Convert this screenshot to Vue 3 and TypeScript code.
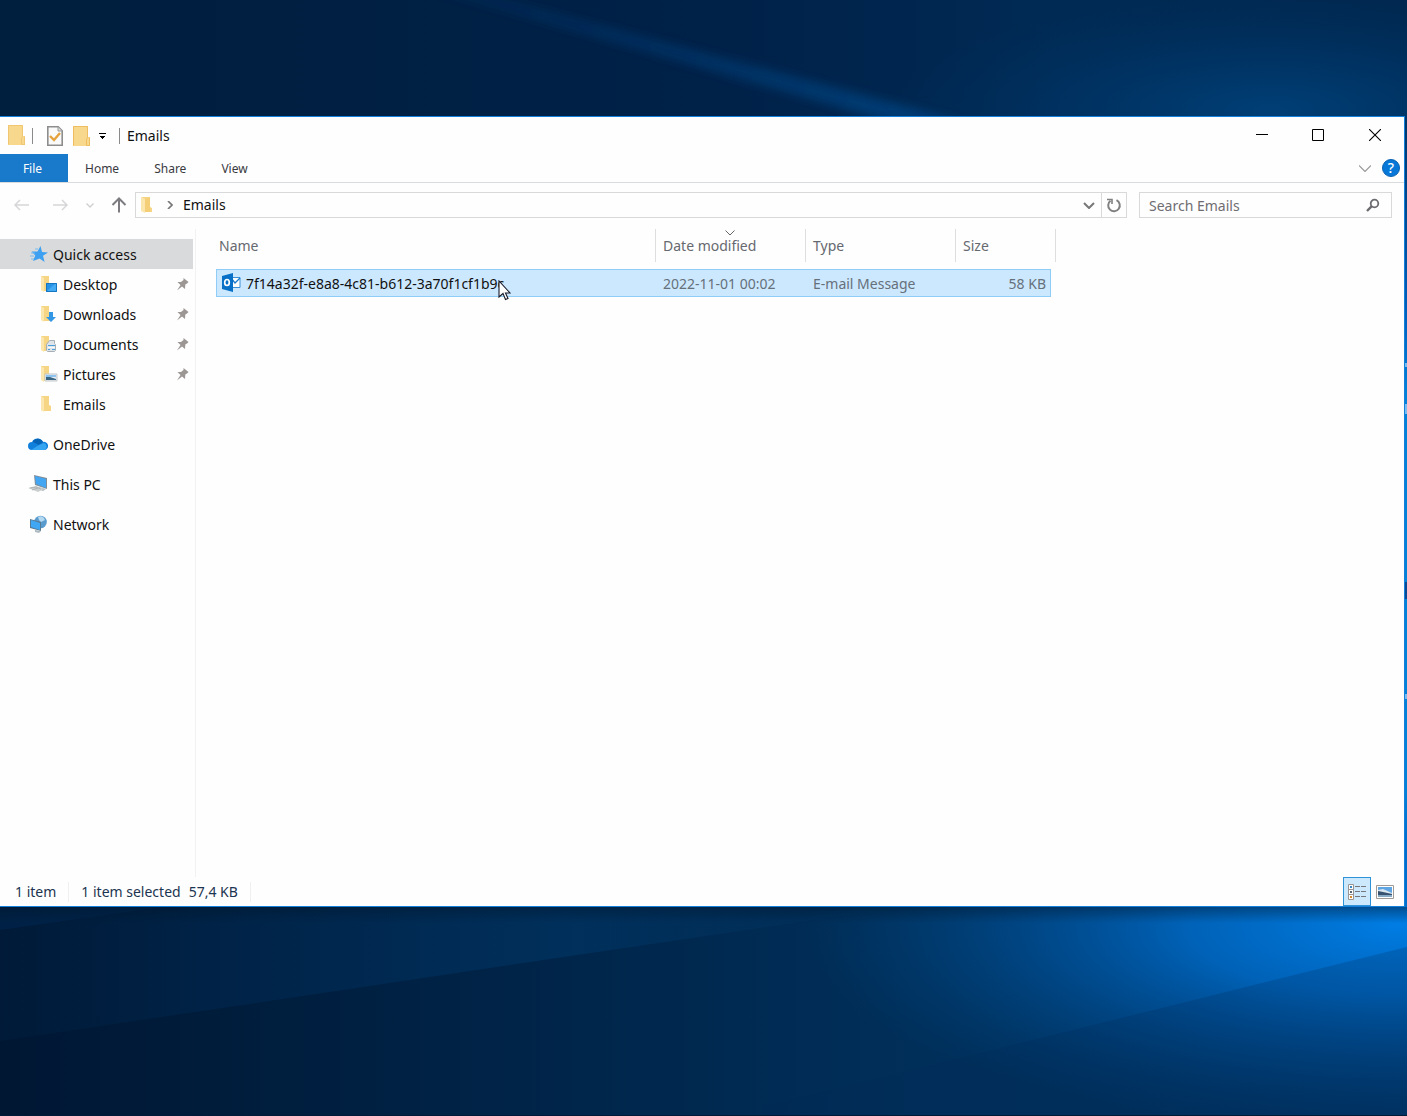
<script setup lang="ts">
import { ref } from 'vue'

interface NavItem {
  label: string
  icon: string
  pinned: boolean
}

const quickItems: NavItem[] = [
  { label: 'Desktop', icon: 'desktop', pinned: true },
  { label: 'Downloads', icon: 'downloads', pinned: true },
  { label: 'Documents', icon: 'documents', pinned: true },
  { label: 'Pictures', icon: 'pictures', pinned: true },
  { label: 'Emails', icon: 'folder', pinned: false },
]
const places: NavItem[] = [
  { label: 'OneDrive', icon: 'onedrive', pinned: false },
  { label: 'This PC', icon: 'pc', pinned: false },
  { label: 'Network', icon: 'network', pinned: false },
]
const tabs: string[] = ['Home', 'Share', 'View']
const columns: string[] = ['Name', 'Date modified', 'Type', 'Size']
const files = [
  {
    name: '7f14a32f-e8a8-4c81-b612-3a70f1cf1b9c',
    modified: '2022-11-01 00:02',
    type: 'E-mail Message',
    size: '58 KB',
  },
]
const query = ref('')
</script>

<template>
  <div class="desktop">
    <svg class="wallpaper" viewBox="0 0 1407 1116" preserveAspectRatio="none" aria-hidden="true">
      <defs>
        <linearGradient id="top" x1="0" x2="1" y1="0" y2="0">
          <stop offset="0" stop-color="#001e3d" />
          <stop offset="0.5" stop-color="#002148" />
          <stop offset="0.75" stop-color="#002a54" />
          <stop offset="1" stop-color="#002850" />
        </linearGradient>
        <radialGradient id="topGlow" gradientUnits="userSpaceOnUse" cx="0" cy="0" r="1" gradientTransform="translate(1270 110) scale(380 115)">
          <stop offset="0" stop-color="#003f76" />
          <stop offset="0.4" stop-color="#00376a" stop-opacity="0.8" />
          <stop offset="1" stop-color="#003060" stop-opacity="0" />
        </radialGradient>
        <linearGradient id="ray" gradientUnits="userSpaceOnUse" x1="430" y1="0" x2="930" y2="116">
          <stop offset="0" stop-color="#003468" stop-opacity="0.25" />
          <stop offset="1" stop-color="#003f7a" stop-opacity="0.9" />
        </linearGradient>
        <linearGradient id="bottom" x1="0" x2="1" y1="0" y2="0">
          <stop offset="0" stop-color="#001733" />
          <stop offset="0.2" stop-color="#001e3e" />
          <stop offset="0.45" stop-color="#00274d" />
          <stop offset="0.65" stop-color="#002f5a" />
          <stop offset="1" stop-color="#003262" />
        </linearGradient>
        <radialGradient id="bottomGlow" gradientUnits="userSpaceOnUse" cx="0" cy="0" r="1" gradientTransform="translate(1400 925) scale(600 205)">
          <stop offset="0" stop-color="#007de4" />
          <stop offset="0.35" stop-color="#0069c4" stop-opacity="0.88" />
          <stop offset="0.6" stop-color="#0058a6" stop-opacity="0.6" />
          <stop offset="1" stop-color="#004680" stop-opacity="0" />
        </radialGradient>
        <linearGradient id="beam" x1="0" x2="1" y1="0" y2="0">
          <stop offset="0" stop-color="#003468" stop-opacity="0" />
          <stop offset="0.5" stop-color="#003c74" stop-opacity="0.5" />
          <stop offset="1" stop-color="#004c90" stop-opacity="0.4" />
        </linearGradient>
        <linearGradient id="upperBeam" gradientUnits="userSpaceOnUse" x1="0" y1="0" x2="950" y2="0">
          <stop offset="0" stop-color="#003468" stop-opacity="0.1" />
          <stop offset="0.6" stop-color="#003c70" stop-opacity="0.45" />
          <stop offset="1" stop-color="#003c70" stop-opacity="0" />
        </linearGradient>
        <linearGradient id="edge" x1="0" x2="0" y1="0" y2="1">
          <stop offset="0" stop-color="#003568" />
          <stop offset="0.25" stop-color="#0060bc" />
          <stop offset="0.35" stop-color="#0082d8" />
          <stop offset="0.85" stop-color="#0082d8" />
          <stop offset="0.92" stop-color="#006ccc" />
          <stop offset="1" stop-color="#0070cc" />
        </linearGradient>
        <linearGradient id="shade" x1="0" x2="0" y1="0" y2="1">
          <stop offset="0" stop-color="#001428" stop-opacity="0.4" />
          <stop offset="1" stop-color="#001428" stop-opacity="0" />
        </linearGradient>
        <filter id="soft" x="-5%" y="-20%" width="110%" height="140%"><feGaussianBlur stdDeviation="5" /></filter>
      </defs>
      <rect width="1407" height="130" fill="url(#top)" />
      <rect width="1407" height="130" fill="url(#topGlow)" />
      <path d="M430-10H470L965 122H890Z" fill="url(#ray)" filter="url(#soft)" />
      <rect y="900" width="1407" height="216" fill="url(#bottom)" />
      <path d="M0 1041L900 907H0Z" fill="url(#upperBeam)" />
      <path d="M0 930L170 906H0Z" fill="#00264e" opacity="0.6" />
      <rect y="900" width="1407" height="216" fill="url(#bottomGlow)" />
      <path d="M1407 947L1194 1000L763 1107V1116H1407Z" fill="#002a58" opacity="0.22" />
      <rect y="907" width="1407" height="16" fill="url(#shade)" />
      <rect x="1390" y="116" width="17" height="791" fill="url(#edge)" />
      <rect x="1400" y="582" width="7" height="17" fill="#084a94" />
      <path d="M1400 404h7v10h-7zM1400 694h7v5h-7zM1400 363h7v4h-7z" fill="#78bdf2" />
      <rect y="1115" width="1407" height="1" fill="#001a38" />
    </svg>

    <main class="window">
      <header class="titlebar">
        <svg class="title-folder" viewBox="0 0 18 22"><path d="M0 0h15v11h2v9H0z" fill="#f7d88c" /><path d="M.5 19.500V.5h14v11l-1 2v6h3v-8" fill="none" stroke="#f0c673" /></svg>
        <span class="rule first"></span>
        <button class="tool" aria-label="Properties">
          <svg width="16" height="20" viewBox="0 0 16 20"><path d="M.8.8h10.4l4 4v14.4H.8z" fill="#fafafa" stroke="#8d8d8d" stroke-width="1.6" /><path d="M11 1v4h4" fill="#ddd" stroke="#999" /><path d="M3 10l4 4 6-7" fill="none" stroke="#e6a23c" stroke-width="2.4" /></svg>
        </button>
        <button class="tool folder-tool" aria-label="New folder">
          <svg width="18" height="22" viewBox="0 0 18 22"><path d="M0 1h15v11h2v9H0z" fill="#f7d88c" /><path d="M.5 20.500v-19h14v11l-1 2v6h3v-8" fill="none" stroke="#edbd60" /></svg>
        </button>
        <button class="tool more" aria-label="Customize toolbar">
          <svg width="7" height="6" viewBox="0 0 7 6" shape-rendering="crispEdges"><path d="M0 0h7v1H0zM0 3h7L3.500 6z" fill="#000" /></svg>
        </button>
        <span class="rule"></span>
        <h1 class="title">Emails</h1>
        <div class="controls">
          <button aria-label="Minimize"><svg width="12" height="12" viewBox="0 0 12 12"><path d="M0 5.500h12" stroke="#000" /></svg></button>
          <button aria-label="Maximize"><svg width="12" height="12" viewBox="0 0 12 12"><path d="M.5.5h11v11H.5z" fill="none" stroke="#000" /></svg></button>
          <button aria-label="Close"><svg width="12" height="12" viewBox="0 0 12 12"><path d="M0 0l12 12M12 0L0 12" stroke="#000" stroke-width="1.1" /></svg></button>
        </div>
      </header>

      <nav class="ribbon" aria-label="Ribbon">
        <button class="file-tab">File</button>
        <button v-for="tab in tabs" :key="tab" class="tab">{{ tab }}</button>
        <button class="expand" aria-label="Expand ribbon"><svg width="12" height="7" viewBox="0 0 12 7"><path d="M0 .5l6 6 6-6" fill="none" stroke="#999" stroke-width="1.200" /></svg></button>
        <button class="help" aria-label="Help">?</button>
      </nav>

      <div class="navbar">
        <div class="history">
          <button aria-label="Back"><svg width="16" height="12" viewBox="0 0 16 12"><path d="M1 6h14M6 1L1 6l5 5" fill="none" stroke="#d6d6d8" stroke-width="1.500" /></svg></button>
          <button aria-label="Forward"><svg width="16" height="12" viewBox="0 0 16 12"><path d="M1 6h14M10 1l5 5-5 5" fill="none" stroke="#d6d6d8" stroke-width="1.500" /></svg></button>
          <button aria-label="Recent locations"><svg width="8" height="5" viewBox="0 0 8 5"><path d="M.5.5L4 4 7.500.5" fill="none" stroke="#cfcfd1" stroke-width="1.300" /></svg></button>
          <button aria-label="Up"><svg width="16" height="16" viewBox="0 0 16 16"><path d="M8 15.500V2M1.500 8L8 1.500 14.500 8" fill="none" stroke="#7d7b80" stroke-width="2" /></svg></button>
        </div>
        <div class="address">
          <svg class="crumb-folder" width="12" height="18" viewBox="0 0 12 18"><path d="M1 1h8v10l2 1v4H4L1 15z" fill="#f6d684" /><path d="M0 1l4 2v14l-4-2z" fill="#fbe6ae" /><path d="M4 3l5-2v15H4z" fill="#f4cf78" /></svg>
          <svg class="crumb-sep" width="6" height="8" viewBox="0 0 6 8"><path d="M1 0l4 4-4 4" fill="none" stroke="#777" stroke-width="1.700" /></svg>
          <button class="crumb">Emails</button>
          <button class="drop" aria-label="Previous locations"><svg width="12" height="8" viewBox="0 0 12 8"><path d="M1 2l5 5 5-5" fill="none" stroke="#777" stroke-width="2" /></svg></button>
          <button class="refresh" aria-label="Refresh"><svg width="16" height="16" viewBox="0 0 16 16"><path d="M10.500 3.200A5.800 5.800 0 1 1 4.500 3.800" fill="none" stroke="#808080" stroke-width="2" /><path d="M1 2.500h5V7" fill="none" stroke="#808080" stroke-width="1.600" /></svg></button>
        </div>
        <label class="search">
          <input v-model="query" type="text" placeholder="Search Emails" aria-label="Search Emails" />
          <svg width="14" height="14" viewBox="0 0 14 14"><circle cx="8.500" cy="5.500" r="3.800" fill="none" stroke="#6d6b70" stroke-width="1.800" /><path d="M5.800 8.200L1 13" stroke="#6d6b70" stroke-width="2.400" /></svg>
        </label>
      </div>

      <div class="body">
        <nav class="sidebar" aria-label="Folders">
          <a href="#quick" class="nav-row selected">
            <svg class="nav-icon" viewBox="0 0 20 20"><path d="M12.500 2l1.500 6 6 .4-5 3.400 1.600 6.200-5-3.500L5 17l2.300-5.500L3.500 7.600l6-.2z" fill="#3da0f0" /><path d="M3 9h4M2 12h4M3 15h3M7 5h3" stroke="#79bdf2" /></svg>
            <span>Quick access</span>
          </a>
          <a v-for="item in quickItems" :key="item.label" :href="'#' + item.icon" class="nav-row child">
            <svg class="nav-icon small" viewBox="0 0 18 18">
              <path d="M1 1h8v9l2 1v5H4L1 15z" fill="#f6d684" />
              <path d="M1 1l3 2v14l-3-2z" fill="#fbe6ae" />
              <g v-if="item.icon === 'desktop'"><path d="M6 8h11v9H6z" fill="#2793e6" /><path d="M7 16l9-8h1v9z" fill="#43aaf4" /><path d="M6.500 8.500h10v8h-10z" fill="none" stroke="#1675bf" /></g>
              <g v-else-if="item.icon === 'downloads'"><path d="M9 7h4v5h3l-5 5-5-5h3z" fill="#3297e5" /></g>
              <g v-else-if="item.icon === 'documents'"><path d="M6.500 9.500l3-4h5v3l1 1v6l-1 1h-7l-1-1z" fill="#dfe4e8" stroke="#a7afb5" /><path d="M8 10.500h7M8 14.500h2M12 14.500h3" stroke="#4a9fdf" /><path d="M8 12.500h7" stroke="#f7f9fa" /></g>
              <g v-else-if="item.icon === 'pictures'"><path d="M5 9h12v7H5z" fill="#e9eef2" stroke="#c1c6ca" /><path d="M6 10h10v2H6z" fill="#8dc3ef" /><path d="M6 12l4 0 6 2v1H6z" fill="#3a6684" /></g>
            </svg>
            <span>{{ item.label }}</span>
            <svg v-if="item.pinned" class="pin" width="13" height="14" viewBox="0 0 13 14"><path d="M7.500 1L12.500 5 11 6.500 9.300 7.500 9 12 6 9.500 1 13.500l3.500-5.500L1.500 5H5l2.500-2z" fill="#9c9794" /></svg>
          </a>
          <a v-for="item in places" :key="item.label" :href="'#' + item.icon" class="nav-row place">
            <svg v-if="item.icon === 'onedrive'" class="nav-icon" viewBox="0 0 20 20"><path d="M4 16a4 4 0 0 1 0-8 6 6 0 0 1 11 0 4 4 0 0 1 2 8z" fill="#1180dc" /><path d="M5 7a6 6 0 0 1 10 1l-4 3-6-3z" fill="#0763b5" /><path d="M3 16l8-5 5-2a4 4 0 0 1 1 7z" fill="#35a4f1" /></svg>
            <svg v-else-if="item.icon === 'pc'" class="nav-icon" viewBox="0 0 20 20"><path d="M6 1l13 3v11L7 11z" fill="#7f8d99" /><path d="M7 2l11 3v9L8 10z" fill="#42a6f3" /><path d="M11 13l7 2-3 2-5-2z" fill="#aeb8bd" /><path d="M0 14l8-2 8 3-6 3z" fill="#cbcfcf" /><path d="M2 14l6-1 5 2M4 16l6-2" fill="none" stroke="#aeb4b5" /></svg>
            <svg v-else class="nav-icon" viewBox="0 0 20 20"><circle cx="12.500" cy="8" r="6.300" fill="#5a9bce" /><path d="M10 3c3-2 6 0 7 3l-4 2-2-2z" fill="#b5d9f0" /><path d="M2 5l11 3v9L2 14z" fill="#597a93" /><path d="M3 6l9 3v7l-9-3z" fill="#40a7f5" /><path d="M7 16l6 1-2 2-4-1z" fill="#aeb9bf" /></svg>
            <span>{{ item.label }}</span>
          </a>
        </nav>

        <section class="content">
          <table>
            <thead>
              <tr>
                <th v-for="column in columns" :key="column" scope="col">
                  <svg v-if="column === 'Date modified'" class="sort" width="10" height="6" viewBox="0 0 10 6"><path d="M.5.5L5 5 9.500.5" fill="none" stroke="#666" /></svg>
                  <button>{{ column }}</button>
                </th>
              </tr>
            </thead>
            <tbody>
              <tr v-for="file in files" :key="file.name">
                <td class="name">
                  <svg width="20" height="20" viewBox="0 0 20 20"><path d="M9 4.500h10v10H9z" fill="#fff" stroke="#3a8fd6" /><path d="M10 5l4 5 5-5" fill="none" stroke="#1979ca" stroke-width="1.300" /><path d="M1 3l11-3v19L1 16z" fill="#0870c7" /><ellipse cx="6" cy="9.500" rx="2.300" ry="3" fill="none" stroke="#fff" stroke-width="1.700" /></svg>
                  <span>{{ file.name }}</span>
                </td>
                <td>{{ file.modified }}</td>
                <td>{{ file.type }}</td>
                <td class="size">{{ file.size }}</td>
              </tr>
            </tbody>
          </table>
        </section>
      </div>

      <footer class="status">
        <span class="count">1 item</span>
        <span class="selection"><span>1 item selected</span><span>57,4 KB</span></span>
        <div class="views">
          <button class="active" aria-label="Details view">
            <svg width="18" height="18" viewBox="0 0 18 18"><path d="M.5 1.500h5v5h-5zM.5 6.500h5v5h-5zM.5 11.500h5v5h-5z" fill="#fff" stroke="#9b9490" /><path d="M2 3h2v2H2z" fill="#3687c4" /><path d="M2 8h2v2H2z" fill="#596673" /><path d="M2 13h2v2H2z" fill="#d58a2b" /><path d="M7 3.500h5M13 3.500h5M7 8.500h5M13 8.500h5M7 13.500h5M13 13.500h5" stroke="#75777c" /></svg>
          </button>
          <button aria-label="Large icons view">
            <svg width="18" height="14" viewBox="0 0 18 14"><path d="M.5.5h17v13H.5z" fill="#fff" stroke="#a09a96" /><path d="M2 2h14v10H2z" fill="#5fa5e3" /><path d="M2 5l5-1 9 4v1H2z" fill="#d9e6ef" /><path d="M2 6l5 1 9 2v3H2z" fill="#365270" /><path d="M2 10h14v2H2z" fill="#88aac4" /></svg>
          </button>
        </div>
      </footer>
    </main>

    <svg class="cursor" width="13" height="21" viewBox="0 0 13 21" aria-hidden="true"><path d="M1 1v16l4-3.500 2.500 6 2.500-1-2.500-5.500H12z" fill="#fff" stroke="#1a1a2a" stroke-width="1.100" /></svg>
  </div>
</template>

<style>
body {
  margin: 0;
}
</style>

<style scoped>
* {
  box-sizing: border-box;
}
.desktop {
  position: relative;
  display: flex;
  flex-direction: column;
  min-height: 100vh;
  padding: 116px 2px 209px 0;
  overflow: hidden;
  background: #002148;
  font: 14px/20px "Noto Sans", "Open Sans", sans-serif;
  color: #111;
}
.wallpaper {
  position: absolute;
  inset: 0;
  width: 100%;
  height: 100%;
}
.window {
  position: relative;
  flex: 1;
  display: flex;
  flex-direction: column;
  background: #fefefe;
  border: 1px solid #1580dc;
  border-left: 0;
}
button {
  display: flex;
  align-items: center;
  justify-content: center;
  padding: 0;
  border: 0;
  background: none;
  font: inherit;
  color: inherit;
}
svg {
  flex: none;
}
.titlebar {
  display: flex;
  align-items: center;
  height: 37px;
  padding-left: 8px;
}
.title-folder {
  width: 18px;
  height: 22px;
}
.rule {
  width: 1px;
  height: 16px;
  background: #8a8a8a;
}
.rule.first {
  margin: 0 14px 0 6px;
}
.folder-tool {
  margin: 0 8px 0 10px;
}
.more {
  margin-right: 13px;
}
.title {
  margin: 0 0 0 7px;
  font-size: 14px;
  font-weight: 400;
}
.controls {
  display: flex;
  height: 100%;
  margin-left: auto;
}
.controls button {
  width: 56px;
  height: 36px;
}
.controls button:last-child {
  width: 58px;
}
.ribbon {
  display: flex;
  align-items: center;
  height: 29px;
  padding-right: 4px;
  border-bottom: 1px solid #dadbdc;
  font-size: 12px;
  color: #3a3a3e;
}
.file-tab {
  width: 68px;
  height: 28px;
  padding: 2px 3px 0 0;
  background: #1979ca;
  color: #fff;
}
.tab {
  height: 28px;
  margin-right: 1px;
  padding: 2px 17px 0;
}
.expand {
  margin-left: auto;
}
.help {
  width: 18px;
  height: 18px;
  margin-left: 11px;
  border: 1px solid #0b62b0;
  border-radius: 50%;
  background: #0878d8;
  font-size: 14px;
  font-weight: 500;
  color: #fff;
}
.navbar {
  display: flex;
  align-items: center;
  height: 46px;
  padding: 0 12px 2px 14px;
}
.history {
  display: flex;
  align-items: center;
  width: 121px;
}
.history button:nth-child(2) {
  margin-left: 22px;
}
.history button:nth-child(3) {
  margin-left: 18px;
}
.history button:nth-child(4) {
  margin-left: 17px;
}
.address {
  display: flex;
  flex: 1;
  align-items: center;
  height: 26px;
  border: 1px solid #d9d9d9;
}
.crumb-folder {
  margin: 0 14px 0 5px;
}
.crumb-sep {
  margin-right: 10px;
}
.drop {
  width: 24px;
  margin-left: auto;
}
.refresh {
  width: 25px;
  height: 24px;
  border-left: 1px solid #d9d9d9;
}
.search {
  display: flex;
  align-items: center;
  width: 253px;
  height: 26px;
  margin-left: 12px;
  padding: 0 11px 0 9px;
  border: 1px solid #d9d9d9;
}
.search input {
  flex: 1;
  min-width: 0;
  padding: 2px 0 0;
  border: 0;
  outline: 0;
  background: none;
  font: inherit;
}
.search input::placeholder {
  color: #6f6d72;
  opacity: 1;
}
.body {
  display: flex;
  flex: 1;
}
.sidebar {
  width: 196px;
  padding: 10px 2px 0 0;
  border-right: 1px solid #f2f2f2;
}
.nav-row {
  display: flex;
  align-items: center;
  gap: 5px;
  height: 30px;
  padding: 0 4px 0 28px;
  color: #111;
  text-decoration: none;
}
.nav-row span {
  padding-top: 2px;
}
.selected {
  background: #d9dadb;
}
.child {
  padding-left: 40px;
}
.place {
  margin-top: 10px;
}
.nav-icon {
  width: 20px;
  height: 20px;
}
.nav-icon.small {
  width: 18px;
  height: 18px;
}
.pin {
  margin-left: auto;
}
.content {
  flex: 1;
  padding-left: 20px;
}
table {
  display: block;
  width: 840px;
}
thead,
tbody {
  display: block;
}
tr {
  display: grid;
  grid-template-columns: 440px 150px 150px 1fr;
  align-items: center;
}
th {
  position: relative;
  display: flex;
  height: 33px;
  padding-left: 7px;
  border-right: 1px solid #dedede;
  font-weight: 400;
  color: #66696f;
}
th:first-child {
  padding-left: 3px;
}
.sort {
  position: absolute;
  top: 1px;
  left: 69px;
}
tbody tr {
  height: 28px;
  margin: 7px 5px 0 0;
  background: #cce8ff;
  box-shadow: inset 0 0 0 1px #90ccf8;
}
td {
  padding: 2px 0 0 7px;
  color: #66707a;
}
.name {
  display: flex;
  align-items: center;
  gap: 5px;
  padding: 0 0 0 5px;
  color: #111;
}
.name span {
  padding-top: 2px;
}
.size {
  padding-right: 5px;
  text-align: right;
}
.status {
  display: flex;
  align-items: center;
  height: 29px;
  padding-left: 15px;
  color: #1c3550;
}
.count {
  padding-right: 12px;
  border-right: 1px solid #f0f0f0;
}
.selection {
  display: flex;
  gap: 8px;
  padding: 0 12px;
  border-right: 1px solid #f0f0f0;
}
.views {
  display: flex;
  height: 100%;
  margin-left: auto;
  padding-right: 5px;
}
.views button {
  width: 28px;
  height: 29px;
}
.views .active {
  border: 1px solid #3192d8;
  background: #cce8fc;
}
.cursor {
  position: absolute;
  top: 280px;
  left: 498px;
}
</style>
